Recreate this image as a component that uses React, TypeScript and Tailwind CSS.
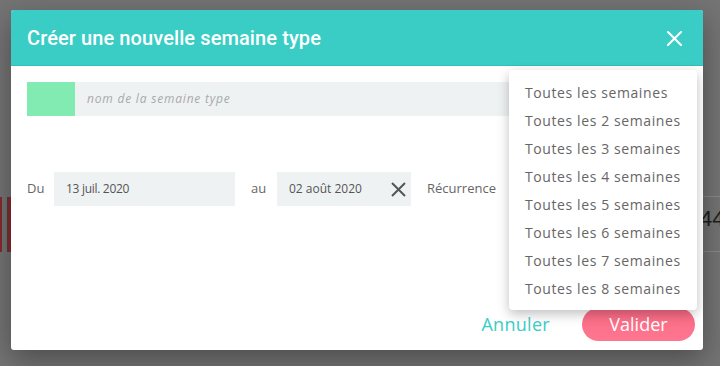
import React from "react";

const body = { fontFamily: '"Open Sans", "Noto Sans", sans-serif' };

export default function App() {
  const items = [
    "Toutes les semaines",
    "Toutes les 2 semaines",
    "Toutes les 3 semaines",
    "Toutes les 4 semaines",
    "Toutes les 5 semaines",
    "Toutes les 6 semaines",
    "Toutes les 7 semaines",
    "Toutes les 8 semaines",
  ];
  return (
    <div className="relative w-[720px] h-[366px] overflow-hidden bg-[#747474]" style={body}>
      {/* background page remnants under the overlay */}
      <div className="absolute left-0 top-[197px] w-[2px] h-[55px] bg-[#862a30]" />
      <div className="absolute left-[7px] top-[197px] w-[5px] h-[55px] bg-[#862a30] border-l border-[#5a3a3c]" />
      <div className="absolute left-[703px] top-[196px] w-[17px] h-px bg-[#8a8a8a]" />
      <div className="absolute left-[703px] top-[251px] w-[17px] h-px bg-[#8a8a8a]" />
      <div
        className="absolute left-[700px] top-[208px] text-[22px] leading-none text-[#1e1e1e]"
        style={{ fontFamily: '"Liberation Sans", sans-serif' }}
      >
        44
      </div>

      {/* dialog */}
      <div className="absolute left-[11px] top-[10px] w-[692px] h-[340px] bg-white rounded-[3px] shadow-[0_10px_30px_rgba(0,0,0,0.35)] flex flex-col">
        <div className="h-[56px] bg-[#3acdc5] border-b border-[#32c0b8] rounded-t-[3px] flex items-center justify-between pl-4 pr-[21px]">
          <span
            className="text-white text-[20px] font-medium tracking-[0.1px]"
            style={{ fontFamily: 'Roboto, "Liberation Sans", sans-serif' }}
          >
            Créer une nouvelle semaine type
          </span>
          <svg width="15" height="15" viewBox="0 0 15 15" className="mt-px">
            <path d="M1 1L14 14M14 1L1 14" stroke="white" strokeWidth="2" strokeLinecap="square" />
          </svg>
        </div>

        <div className="flex-1 flex flex-col px-4 pt-[16px]">
          <div className="flex h-[34px]">
            <div className="w-12 bg-[#82ebb1]" />
            <div className="flex-1 bg-[#eff2f3] flex items-center pl-3 text-[12px] italic tracking-[0.8px] text-[#a9a9a9]">
              nom de la semaine type
            </div>
          </div>

          <div className="flex items-center h-[34px] mt-[56px] text-[13px] text-[#666]">
            <span className="w-[27px]">Du</span>
            <div className="w-[181px] h-full bg-[#eff2f3] flex items-center pl-3 text-[12px] tracking-[-0.3px] text-[#555]">
              13 juil. 2020
            </div>
            <span className="ml-4 w-[26px]">au</span>
            <div className="w-[134px] h-full bg-[#eff2f3] flex items-center justify-between pl-3 pr-[5px] text-[12px] text-[#555]">
              <span>02 août 2020</span>
              <svg width="15" height="15" viewBox="0 0 15 15">
                <path d="M1 1L14 14M14 1L1 14" stroke="#555" strokeWidth="2" />
              </svg>
            </div>
            <span className="ml-4">Récurrence</span>
          </div>

          <div className="mt-auto mb-[9px] -mr-2 flex items-center justify-end">
            <span className="text-[18px] tracking-[0.3px] text-[#3acdc5] mr-8">Annuler</span>
            <div className="w-[113px] h-[33px] rounded-full bg-gradient-to-b from-[#f96a84] to-[#ff7690] flex items-center justify-center text-white text-[18px]">
              Valider
            </div>
          </div>
        </div>
      </div>

      {/* dropdown menu */}
      <div className="absolute left-[509px] top-[70px] w-[188px] bg-white rounded-[4px] shadow-[0_4px_12px_rgba(0,0,0,0.25)] py-2">
        {items.map((t) => (
          <div key={t} className="h-7 flex items-center pl-4 text-[14px] tracking-[0.6px] text-[#666]">
            {t}
          </div>
        ))}
      </div>
    </div>
  );
}
